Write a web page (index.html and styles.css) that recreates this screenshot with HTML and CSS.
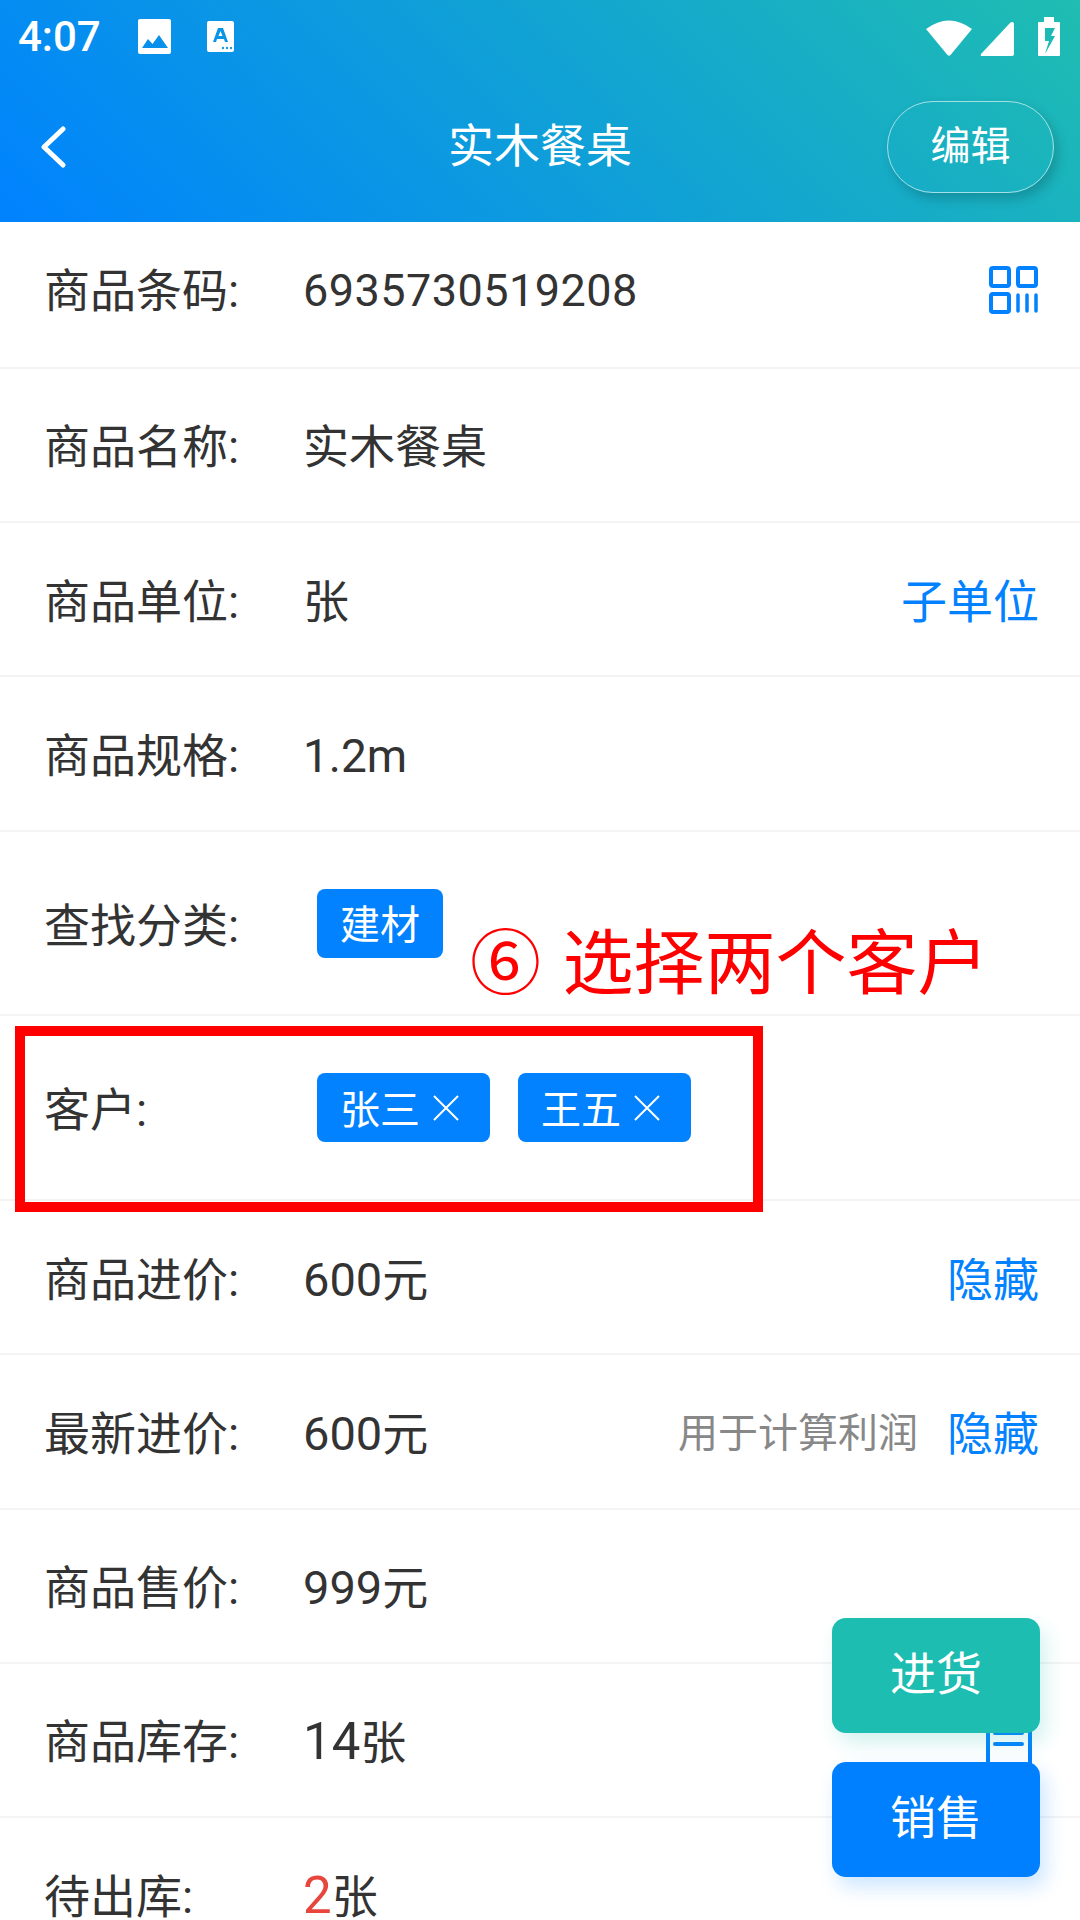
FILE: index.html
```html
<!DOCTYPE html>
<html lang="zh-CN">
  <head>
    <meta charset="UTF-8" />
    <title>实木餐桌</title>
    <link rel="stylesheet" href="styles.css">
  </head>
  <body>
    <div class="screen">
      <header class="top">
        <div class="status">
          <span class="time">4:07</span>
          <svg class="ic-pic" viewBox="0 0 33 35"><path fill="#fff" fill-rule="evenodd" d="M2 0h29a2 2 0 0 1 2 2v31a2 2 0 0 1-2 2H2a2 2 0 0 1-2-2V2a2 2 0 0 1 2-2zM4 29h26l-9-13-6.500 9-4.500-5z"/></svg>
          <svg class="ic-a" viewBox="0 0 27 31"><path fill="#fff" fill-rule="evenodd" d="M2 0h23a2 2 0 0 1 2 2v27a2 2 0 0 1-2 2H2a2 2 0 0 1-2-2V2a2 2 0 0 1 2-2zM11 7L6 21h3l1-3h7l1 3h3L16 7zM11.500 15l2-5 2 5z"/><g fill="#1a9bdc"><circle cx="16" cy="27" r="1.200"/><circle cx="20" cy="27" r="1.200"/><circle cx="24" cy="27" r="1.200"/></g></svg>
          <span class="status-right">
            <svg class="ic-wifi" viewBox="0 0 46 36"><path fill="#fff" d="M0 9Q23-8 46 9L24.500 35q-1.500 1.500-3 0z"/></svg>
            <svg class="ic-signal" viewBox="0 0 34 34"><path fill="#fff" d="M32 0q2 0 2 2v30q0 2-2 2H2q-2 0-1-2L30 1q1-1 2-1z"/></svg>
            <svg class="ic-batt" viewBox="0 0 22 39"><path fill="#fff" fill-rule="evenodd" d="M6 0h10v5h5q1 0 1 1v32q0 1-1 1H1q-1 0-1-1V6q0-1 1-1h5zM7 11v13h4l-4 13 10-18h-4l4-8z"/></svg>
          </span>
        </div>
        <div class="bar">
          <svg class="back" viewBox="0 0 26 42"><path fill="none" stroke="#fff" stroke-width="5" stroke-linecap="round" stroke-linejoin="round" d="M23 3L4 21l19 18"/></svg>
          <h1 class="title">实木餐桌</h1>
          <button class="edit">编辑</button>
        </div>
      </header>

      <div class="row r1">
        <span class="label">商品条码:</span>
        <span class="value code">6935730519208</span>
        <svg class="qr" viewBox="0 0 50 48"><g fill="none" stroke="#0382ff" stroke-width="4"><rect x="2" y="2" width="18" height="18" rx="2"/><rect x="29" y="2" width="18" height="18" rx="2"/><rect x="2" y="28" width="18" height="18" rx="2"/></g><path stroke="#0382ff" stroke-width="3.500" stroke-linecap="round" d="M29 29v16M38 29v16M47 29v16"/></svg>
      </div>
      <div class="row">
        <span class="label">商品名称:</span>
        <span class="value">实木餐桌</span>
      </div>
      <div class="row">
        <span class="label">商品单位:</span>
        <span class="value">张</span>
        <a class="link">子单位</a>
      </div>
      <div class="row">
        <span class="label">商品规格:</span>
        <span class="value">1.2m</span>
      </div>
      <div class="row row-tags">
        <span class="label">查找分类:</span>
        <div class="tags"><span class="tag">建材</span></div>
      </div>
      <div class="row row-tags">
        <span class="label">客户:</span>
        <div class="tags">
          <span class="tag">张三<svg class="x" viewBox="0 0 26 26"><path stroke="#fff" stroke-width="2" d="M1 1l24 24M25 1L1 25"/></svg></span>
          <span class="tag">王五<svg class="x" viewBox="0 0 26 26"><path stroke="#fff" stroke-width="2" d="M1 1l24 24M25 1L1 25"/></svg></span>
        </div>
      </div>
      <div class="row">
        <span class="label">商品进价:</span>
        <span class="value"><span class="num">600</span>元</span>
        <a class="link">隐藏</a>
      </div>
      <div class="row">
        <span class="label">最新进价:</span>
        <span class="value"><span class="num">600</span>元</span>
        <span class="hint">用于计算利润</span>
        <a class="link">隐藏</a>
      </div>
      <div class="row">
        <span class="label">商品售价:</span>
        <span class="value"><span class="num">999</span>元</span>
      </div>
      <div class="row">
        <span class="label">商品库存:</span>
        <span class="value"><span class="num big">14</span>张</span>
        <svg class="doc" viewBox="0 0 46 80"><path fill="none" stroke="#0382ff" stroke-width="4" d="M2 6q0-2 2-2h38q2 0 2 2v70q0 2-2 2H4q-2 0-2-2z"/><path stroke="#0382ff" stroke-width="4" stroke-linecap="round" d="M9 31h27M9 42h27"/></svg>
      </div>
      <div class="row">
        <span class="label">待出库:</span>
        <span class="value"><span class="num big red">2</span>张</span>
      </div>

      <div class="mark-box"></div>
      <div class="mark-text">⑥ 选择两个客户</div>

      <div class="fabs">
        <button class="fab buy">进货</button>
        <button class="fab sell">销售</button>
      </div>
    </div>
  </body>
</html>
```

FILE: styles.css
```css
* {
  box-sizing: border-box;
  font-family: "Roboto", "Noto Sans CJK SC", sans-serif;
}
html, body {
  margin: 0;
  padding: 0;
  background-color: #fff;
}
.screen {
  position: relative;
  width: 1080px;
  height: 1920px;
  overflow: hidden;
  color: #333;
}

/* header */
.top {
  height: 222px;
  background: linear-gradient(45deg, #0082ff 0%, #1fbdb1 100%);
  color: #fff;
}
.status {
  display: flex;
  align-items: center;
  height: 72px;
  padding: 0 20px 0 18px;
}
.time {
  width: 102px;
  font-weight: 500;
  font-size: 42px;
}
.ic-pic {
  width: 33px;
  height: 35px;
  margin-left: 18px;
}
.ic-a {
  width: 27px;
  height: 31px;
  margin-left: 36px;
}
.status-right {
  display: flex;
  align-items: flex-end;
  margin-left: auto;
}
.ic-wifi {
  width: 46px;
  height: 36px;
}
.ic-signal {
  width: 34px;
  height: 34px;
  margin-left: 8px;
}
.ic-batt {
  width: 22px;
  height: 39px;
  margin-left: 24px;
}
.bar {
  display: grid;
  grid-template-columns: 1fr auto 1fr;
  align-items: center;
  height: 150px;
  padding: 0 26px;
}
.back {
  width: 26px;
  height: 42px;
  margin-left: 14px;
}
.title {
  margin: 0;
  padding-bottom: 10px;
  font-size: 46px;
  font-weight: 400;
}
.edit {
  justify-self: end;
  width: 167px;
  height: 92px;
  margin: 0;
  padding: 0 0 8px;
  border: 1px solid rgba(255, 255, 255, 0.6);
  border-radius: 46px;
  background: transparent;
  color: #fff;
  font-size: 40px;
  box-shadow: 4px 6px 12px rgba(0, 0, 0, 0.18);
}

/* rows */
.row {
  display: flex;
  align-items: center;
  height: 154.3px;
  padding: 5px 41px 0 44px;
  border-bottom: 2px solid #f4f4f4;
  line-height: 64px;
}
.r1 {
  height: 146.7px;
  padding-top: 0;
  padding-bottom: 6px;
}
.row-tags {
  height: 184.7px;
  padding-top: 0;
  align-items: flex-start;
}
.label {
  width: 259px;
  flex-shrink: 0;
  font-size: 46px;
  color: #333;
}
.value {
  font-size: 46px;
  color: #333;
}
.code {
  font-size: 45px;
  letter-spacing: 0.45px;
}
.num {
  font-size: 47px;
}
.big {
  font-size: 51px;
}
.row-tags .label {
  padding-top: 62px;
}
.tags {
  display: flex;
  gap: 28px;
  margin-left: 14px;
  padding-top: 57px;
}
.tag {
  display: flex;
  align-items: center;
  height: 69px;
  padding: 6px 23px 0;
  border-radius: 8px;
  background-color: #0382ff;
  color: #fff;
  font-size: 40px;
}
.tag:has(.x) {
  padding-right: 31px;
}
.x {
  width: 26px;
  height: 26px;
  margin-left: 13px;
  margin-top: -6px;
}
.link {
  margin-left: auto;
  color: #0382ff;
  font-size: 46px;
}
.hint {
  margin-left: auto;
  color: #888;
  font-size: 40px;
}
.hint + .link {
  margin-left: 29px;
}
.qr {
  width: 50px;
  height: 48px;
  margin-left: auto;
  margin-bottom: 2px;
}
.doc {
  width: 46px;
  height: 80px;
  margin-left: auto;
  margin-right: 7px;
}
.red {
  color: #e8453c;
}

/* annotation */
.mark-box {
  position: absolute;
  left: 15px;
  top: 1026px;
  width: 748px;
  height: 186px;
  border: 10px solid #f00;
}
.mark-text {
  position: absolute;
  left: 470px;
  top: 916px;
  color: #f00;
  font-size: 71px;
  line-height: 96px;
  word-spacing: 4px;
  white-space: nowrap;
}

/* floating buttons */
.fabs {
  position: absolute;
  right: 40px;
  top: 1618px;
  display: flex;
  flex-direction: column;
  gap: 29px;
}
.fab {
  width: 208px;
  height: 115px;
  padding: 0 0 12px;
  border: 0;
  border-radius: 14px;
  color: #fff;
  font-size: 46px;
}
.buy {
  background-color: #1dbdb1;
  box-shadow: 6px 10px 20px rgba(29, 189, 177, 0.2);
}
.sell {
  background-color: #0080ff;
  box-shadow: 6px 10px 20px rgba(0, 128, 255, 0.2);
}
```
